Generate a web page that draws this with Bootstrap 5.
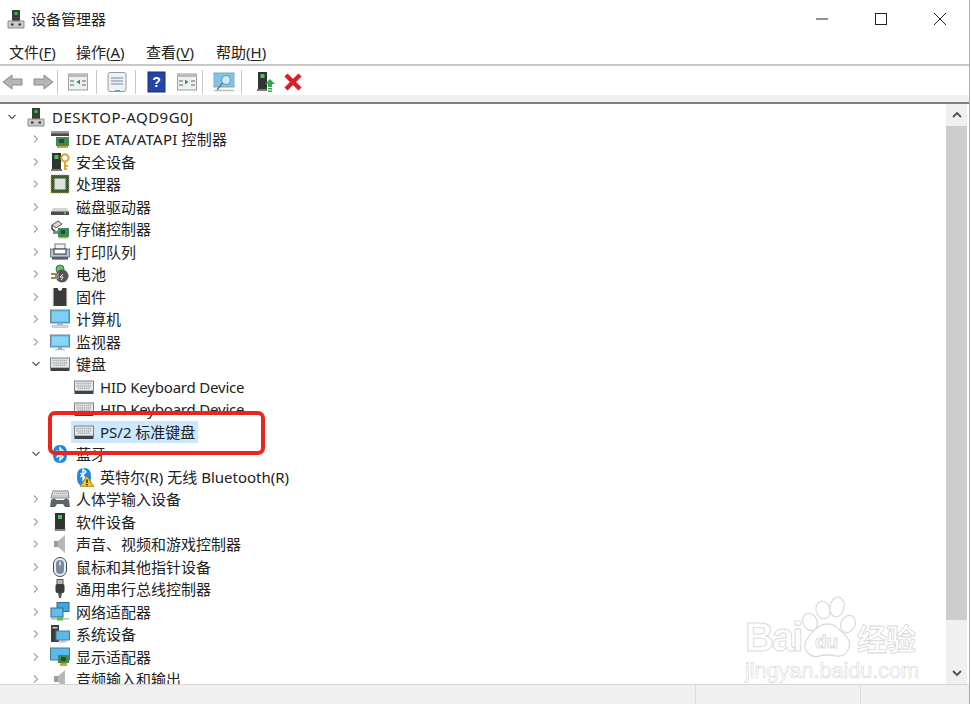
<!DOCTYPE html>
<html lang="zh-CN">
<head>
<meta charset="utf-8">
<title>设备管理器</title>
<link href="https://cdn.jsdelivr.net/npm/bootstrap@5.3.0/dist/css/bootstrap.min.css" rel="stylesheet">
<style>
html,body{height:704px;overflow:hidden;background:#fff}
body{font-family:"Noto Sans","Noto Sans CJK SC",sans-serif;font-size:15px;color:#222;line-height:1.2}
.win{height:704px;width:970px;border-right:1px solid #8fb8d8;position:relative;overflow:hidden}
.titlebar{height:38px;flex:none;padding-left:6px;font-size:15px}
.titlebar svg.appi{width:20px;height:20px;margin-right:5px}
.capbtns{margin-left:auto}
.capbtn{width:59px;height:38px}
.menubar{height:28px;flex:none;padding-left:9px;padding-top:1px;gap:20px;border-bottom:2px solid #c9c9c9;font-size:15px}
.menubar u{text-underline-offset:2px}
.mi{width:50px;white-space:nowrap}
.mi-first{width:47px;white-space:nowrap}
.toolbar{height:29px;flex:none;padding-left:2px;padding-top:2px}
.tb{width:22px;height:22px;flex:none}
.tsep{width:1px;height:24px;background:#c8c8c8;flex:none}
.tb-fwd{margin-left:8px;margin-right:3px}
.tb-a{margin-left:9px;margin-right:7px}
.tb-d{margin-left:9px}
.tb-b{margin-left:9px;margin-right:4px}
.tb-e{margin-left:10px;margin-right:6px}
.tb-f{margin-left:12px}
.tb-g{margin-left:6px}
.strip{height:9px;flex:none;background:#f0f0f0;border-bottom:2px solid #7f7f7f}
.mainp{flex:1 1 auto;min-height:0;overflow:hidden}
.tree{flex:1 1 auto;overflow:hidden;padding-top:1.500px}
.trow{height:22.5px;flex:none;white-space:nowrap}
.l0{padding-left:6px}.l1{padding-left:30px}.l2{padding-left:54px}
.chev{width:12px;height:12px;flex:none}
.tic{width:20px;height:20px;flex:none;margin-left:8px;margin-right:6px}
.sel{background:#cce8ff;height:22px;display:inline-flex;align-items:center;margin-left:5px;padding-left:3px;padding-right:3px}
.sel .tic{margin-left:0}
.wide-caps{letter-spacing:.47px}
.narrow-txt{letter-spacing:-.2px}
.ide-txt{letter-spacing:.2px}
.sbar{width:21px;flex:none;background:#f0f0f0;margin-right:2px}
.sarrow{height:22px;flex:none}
.thumb{height:494px;flex:none;background:#cdcdcd}
.sfill{flex:1 1 auto}
.statusb{height:20px;flex:none;background:#f0f0f0;border-top:1px solid #d7d7d7}
.stcell{border-left:1px solid #dcdcdc;height:100%}
.stcell-a{width:165px}
.stcell-b{width:109px}
.redbox{position:absolute;left:48px;top:411px;width:217px;height:44px;border:4px solid #e8261f;border-radius:7px;pointer-events:none}
.wm{position:absolute;left:740px;top:595px;width:205px;height:90px;pointer-events:none}
.wmt{position:absolute;color:#fff;-webkit-text-stroke:1px #dcdcdc;font-family:"Liberation Sans",sans-serif;line-height:1;white-space:nowrap}
.wm1{left:5px;top:22px;font-size:40px;font-weight:700;letter-spacing:-2px}
.wm2{left:75px;top:37px;font-size:19px;font-weight:700}
.wm3{left:117px;top:27px;font-size:30px;font-family:"Noto Sans CJK SC",sans-serif;font-weight:700;-webkit-text-stroke:.8px #d8d8d8;letter-spacing:-1px}
.wm4{left:5px;top:65px;font-size:21.6px;-webkit-text-stroke:.6px #d8d8d8}
</style>
</head>
<body>
<svg width="0" height="0" class="d-none">
<defs>
<symbol id="chr" viewBox="0 0 12 12"><path d="M4 2.500 7.500 6 4 9.500" fill="none" stroke="#a6a6a6" stroke-width="1.200"/></symbol>
<symbol id="chd" viewBox="0 0 12 12"><path d="M2.500 4 6 7.500 9.500 4" fill="none" stroke="#595959" stroke-width="1.200"/></symbol>
<symbol id="comp" viewBox="0 0 20 20"><rect x="6" y="1" width="8" height="11" fill="#3a3f3a"/><rect x="8.500" y="3" width="3" height="3" fill="#39b54a"/><path d="M2 12h16v7H2z" fill="#c9c9c9" stroke="#8e8e8e"/><rect x="5" y="14.500" width="2.500" height="2" fill="#333"/><rect x="12.500" y="14.500" width="2.500" height="2" fill="#333"/></symbol>
<symbol id="ide" viewBox="0 0 20 20"><rect x="1" y="2" width="18" height="5" rx="1" fill="#9a9a9a"/><rect x="1" y="4.500" width="18" height="2.500" fill="#4a4a4a"/><rect x="6" y="8" width="13" height="9" fill="#3e8a5b"/><rect x="9" y="10" width="5" height="4" fill="#1f4f34"/><rect x="7" y="17" width="11" height="2" fill="#d9a21b"/></symbol>
<symbol id="sec" viewBox="0 0 20 20"><rect x="2" y="1" width="9" height="17" fill="#2f3531"/><rect x="4.500" y="3" width="4" height="4" fill="#4fbf5a"/><rect x="1" y="17" width="11" height="2" fill="#777"/><circle cx="15" cy="6" r="3.600" fill="none" stroke="#d9a93a" stroke-width="2.200"/><path d="M15 9v9M15 14h3M15 17h2" stroke="#d9a93a" stroke-width="2"/></symbol>
<symbol id="cpu" viewBox="0 0 20 20"><rect x="1" y="1" width="18" height="18" fill="#3f5d35"/><rect x="1" y="1" width="18" height="18" fill="none" stroke="#b9a24a" stroke-dasharray="1 1"/><rect x="4.500" y="4.500" width="11" height="11" fill="#dfe2dd"/></symbol>
<symbol id="disk" viewBox="0 0 20 20"><path d="M3 11h14l2 4v3H1v-3z" fill="#d4d4d4"/><rect x="1" y="14.500" width="18" height="3.500" fill="#4c4c4c"/><rect x="14" y="15.500" width="2" height="1.400" fill="#6ee26e"/></symbol>
<symbol id="stor" viewBox="0 0 20 20"><path d="M2 6l6-4 4 3-6 4z" fill="#d8d8d8" stroke="#555"/><path d="M2 6v4l4 3 2-1" fill="none" stroke="#555" stroke-width="1.600"/><rect x="3" y="12" width="11" height="3" fill="#888"/><rect x="8" y="9" width="11" height="9" fill="#3e8a5b"/><rect x="11" y="11" width="4" height="4" fill="#1f4f34"/><rect x="9" y="18" width="9" height="1.400" fill="#d9a21b"/></symbol>
<symbol id="prn" viewBox="0 0 20 20"><rect x="5" y="2" width="10" height="6" fill="#f5f5f5" stroke="#777"/><rect x="0.500" y="7" width="19" height="8" fill="#a9c4d9" stroke="#6b7f8e"/><rect x="4" y="7" width="12" height="5" fill="#fff" stroke="#333"/><rect x="2" y="15" width="16" height="2.600" fill="#5d5d5d"/></symbol>
<symbol id="bat" viewBox="0 0 20 20"><circle cx="10" cy="5" r="4" fill="#6bc06a" stroke="#2f7d32"/><circle cx="12" cy="12" r="6.500" fill="#555"/><path d="M1 10h6M1 14h6" stroke="#a88a2a" stroke-width="1.800"/><path d="M5 9h4v6H5z" fill="#888"/><path d="M13 10l-3 3h3l-2 3" fill="none" stroke="#eee"/></symbol>
<symbol id="fw" viewBox="0 0 20 20"><rect x="3.500" y="1" width="13" height="18" fill="#3a3a3a"/><circle cx="10" cy="1.500" r="2.200" fill="#fff"/><path d="M3.500 3h-1M3.500 6h-1M3.500 9h-1M3.500 12h-1M3.500 15h-1M3.500 18h-1M16.500 3h1M16.500 6h1M16.500 9h1M16.500 12h1M16.500 15h1M16.500 18h1" stroke="#999" stroke-width="1.200"/></symbol>
<symbol id="pc" viewBox="0 0 20 20"><rect x="0.500" y="1" width="19" height="13" fill="#4fb5e8" stroke="#6e8796"/><rect x="2" y="2.500" width="16" height="10" fill="#7fd0f7"/><rect x="7" y="14" width="6" height="2" fill="#aab4ba"/><rect x="2" y="16.500" width="16" height="2" fill="#d5d9dc" stroke="#a4a9ad" stroke-width=".5"/></symbol>
<symbol id="mon" viewBox="0 0 20 20"><rect x="0.500" y="3" width="19" height="12" fill="#59b9ea" stroke="#6e8796"/><rect x="2" y="4.500" width="16" height="9" fill="#8bd3f7"/><rect x="8" y="15" width="4" height="2" fill="#9aa4aa"/><rect x="5" y="17" width="10" height="1.200" fill="#b8bdc0"/></symbol>
<symbol id="kb" viewBox="0 0 20 20"><rect x="0.500" y="4" width="19" height="10" fill="#e4e6e8" stroke="#7f8387"/><path d="M2.500 6.500h15M2.500 9h15M4 11.300h12" stroke="#a6aaae" stroke-width="1.500" stroke-dasharray="1.200 .7"/><rect x="0.500" y="14" width="19" height="3" fill="#3f4245"/></symbol>
<symbol id="bt" viewBox="0 0 20 20"><path d="M10 1c5 0 7 3 7 9s-2 9-7 9-7-3-7-9 2-9 7-9z" fill="#1e88e5"/><path d="M6.500 6.500 13 13l-3 3V4l3 3-6.500 6.500" fill="none" stroke="#fff" stroke-width="1.400"/></symbol>
<symbol id="btw" viewBox="0 0 20 20"><path d="M10 1c5 0 7 3 7 9s-2 9-7 9-7-3-7-9 2-9 7-9z" fill="#1e88e5"/><path d="M6.500 6 11 10.500 9 13V2l3 3-5.500 5" fill="none" stroke="#fff" stroke-width="1.300"/><path d="M13 9 20 19.500H6z" fill="#f5c11d" stroke="#8a6d00" stroke-width=".6"/><path d="M13 12.500v3.500M13 17v1.500" stroke="#222" stroke-width="1.400"/></symbol>
<symbol id="hid" viewBox="0 0 20 20"><path d="M3 2h15l1 7H1z" fill="#e4e6e8" stroke="#7f8387"/><path d="M4 4.500h13M3 7h15" stroke="#a6aaae" stroke-width="1.300" stroke-dasharray="1.200 .7"/><path d="M1 11c2-2 4-2 5 0h8c1-2 3-2 5 0l1 7h-5l-2-3H7l-2 3H0z" fill="#5f6468"/></symbol>
<symbol id="sw" viewBox="0 0 20 20"><rect x="5" y="1" width="10" height="17" fill="#2f3531"/><rect x="8" y="3" width="4" height="4" fill="#4fbf5a"/><rect x="4.500" y="17" width="11" height="2" fill="#8a8a8a"/></symbol>
<symbol id="spk" viewBox="0 0 20 20"><rect x="4" y="7" width="4" height="6" fill="#9a9c9e"/><path d="M8 7l7-6v18l-7-6z" fill="#b5b7b9"/></symbol>
<symbol id="mou" viewBox="0 0 20 20"><rect x="3.500" y="0.500" width="13" height="19" rx="6.500" fill="#e9eef3" stroke="#3d4954"/><rect x="6" y="3" width="8" height="14" rx="4" fill="#7b8a9a"/><rect x="9.200" y="4.500" width="1.600" height="4" fill="#dfe4e9"/></symbol>
<symbol id="usb" viewBox="0 0 20 20"><rect x="7" y="0.500" width="6" height="5" fill="#b8b8b8" stroke="#555"/><rect x="5.500" y="5" width="9" height="9" rx="2" fill="#3a3a3a"/><path d="M8 14h4l-1 5H9z" fill="#555"/></symbol>
<symbol id="net" viewBox="0 0 20 20"><rect x="7" y="0.500" width="12" height="9" fill="#3fa5de" stroke="#2f6e92"/><rect x="1" y="6" width="12" height="9" fill="#62bdee" stroke="#2f6e92"/><rect x="1" y="16" width="18" height="1.600" fill="#bcbcbc"/><rect x="7" y="15" width="6" height="3.500" fill="#58c04e"/></symbol>
<symbol id="sys" viewBox="0 0 20 20"><rect x="1" y="1" width="8" height="17" fill="#3b3f3c"/><rect x="2.500" y="3" width="5" height="1.500" fill="#ccc"/><rect x="6" y="7" width="13.500" height="9" fill="#59b9ea" stroke="#4d7a92"/><rect x="10" y="16" width="5" height="1.500" fill="#9aa4aa"/><rect x="8" y="17.500" width="9" height="1" fill="#b8bdc0"/></symbol>
<symbol id="dsp" viewBox="0 0 20 20"><rect x="0.500" y="1" width="19" height="12" fill="#59b9ea" stroke="#4d7a92"/><rect x="8" y="8" width="11" height="8" fill="#3e8a5b"/><rect x="11" y="10" width="5" height="4" fill="#1f4f34"/><rect x="10" y="16" width="7" height="3" fill="#d9a21b"/></symbol>
<symbol id="win" viewBox="0 0 22 22"><rect x="1.500" y="3" width="19" height="16" fill="#eef1f3" stroke="#9aa0a4"/><rect x="1.500" y="3" width="19" height="3" fill="#b7bcc0"/><path d="M3 9h4v2H3zM3 13h4v2H3zM15 9h4v2h-4zM15 13h4v2h-4z" fill="#a5aaae"/></symbol>
</defs>
</svg>

<div class="win d-flex flex-column">
  <div class="titlebar d-flex align-items-center">
    <svg class="appi" viewBox="0 0 20 20"><use href="#comp"/></svg>
    <span>设备管理器</span>
    <div class="capbtns d-flex">
      <div class="capbtn d-flex align-items-center justify-content-center"><svg width="14" height="14"><path d="M1 7h12" stroke="#222"/></svg></div>
      <div class="capbtn d-flex align-items-center justify-content-center"><svg width="14" height="14"><rect x="1.500" y="1.500" width="11" height="11" fill="none" stroke="#222"/></svg></div>
      <div class="capbtn d-flex align-items-center justify-content-center"><svg width="14" height="14"><path d="M1 1l12 12M13 1 1 13" stroke="#222"/></svg></div>
    </div>
  </div>
  <div class="menubar d-flex align-items-center">
    <span class="mi-first">文件(<u>F</u>)</span><span class="mi">操作(<u>A</u>)</span><span class="mi">查看(<u>V</u>)</span><span class="mi">帮助(<u>H</u>)</span>
  </div>
  <div class="toolbar d-flex align-items-center">
    <svg class="tb" viewBox="0 0 22 22"><path d="M1 11 10 4v4h10v6H10v4z" fill="#b5b5b5" stroke="#8a8a8a"/></svg>
    <svg class="tb tb-fwd" viewBox="0 0 22 22"><path d="M21 11 12 4v4H2v6h10v4z" fill="#b5b5b5" stroke="#8a8a8a"/></svg>
    <div class="tsep"></div>
    <svg class="tb tb-a" viewBox="0 0 22 22"><use href="#win"/><path d="M13 8.500v5l-3.500-2.500z" fill="#2f9e44"/></svg>
    <div class="tsep"></div>
    <svg class="tb tb-a" viewBox="0 0 22 22"><rect x="2" y="1.500" width="18" height="19" rx="2" fill="#eef0f2" stroke="#999"/><path d="M5 7h12M5 10h12M5 13h12" stroke="#6f8aa0"/><rect x="9" y="19" width="5" height="2" fill="#3fb2d8"/></svg>
    <div class="tsep"></div>
    <svg class="tb tb-d" viewBox="0 0 22 22"><rect x="3" y="1" width="17" height="20" fill="#2345a8" stroke="#1b2f7a"/><text x="11.500" y="16" font-size="14" font-weight="700" fill="#fff" text-anchor="middle" font-family="Liberation Sans,sans-serif">?</text></svg>
    <svg class="tb tb-b" viewBox="0 0 22 22"><use href="#win"/><path d="M9 8.500v5l3.500-2.500z" fill="#2f9e44"/></svg>
    <div class="tsep"></div>
    <svg class="tb tb-e" viewBox="0 0 22 22"><rect x="1" y="2" width="20" height="14" fill="#7cc6ee" stroke="#8aa"/><circle cx="13" cy="9" r="4.500" fill="#cfe8f5" stroke="#6d8ea0"/><path d="M9.500 12 4 19" stroke="#777" stroke-width="1.500"/><path d="M1 19.500h20" stroke="#bbb" stroke-width="1.500"/></svg>
    <div class="tsep"></div>
    <svg class="tb tb-f" viewBox="0 0 22 22"><rect x="4" y="1" width="9" height="17" fill="#2f3531"/><rect x="6.500" y="3" width="4" height="4" fill="#4fbf5a"/><rect x="3" y="18" width="10" height="2" fill="#777"/><path d="M16 8l5 5h-3v3h-4v-3h-3z" fill="#2fa84f"/><path d="M14 17h4v1.500h-4zM14 19.500h4V21h-4z" fill="#2fa84f"/></svg>
    <svg class="tb tb-g" viewBox="0 0 22 22"><path d="M4 4 18 18M18 4 4 18" stroke="#d9202a" stroke-width="4.500"/></svg>
  </div>
  <div class="strip"></div>
  <div class="mainp d-flex">
    <div class="tree d-flex flex-column">
      <div class="trow l0 d-flex align-items-center"><svg class="chev"><use href="#chd"/></svg><svg class="tic"><use href="#comp"/></svg><span class="wide-caps">DESKTOP-AQD9G0J</span></div>
      <div class="trow l1 d-flex align-items-center"><svg class="chev"><use href="#chr"/></svg><svg class="tic"><use href="#ide"/></svg><span class="ide-txt">IDE ATA/ATAPI 控制器</span></div>
      <div class="trow l1 d-flex align-items-center"><svg class="chev"><use href="#chr"/></svg><svg class="tic"><use href="#sec"/></svg><span>安全设备</span></div>
      <div class="trow l1 d-flex align-items-center"><svg class="chev"><use href="#chr"/></svg><svg class="tic"><use href="#cpu"/></svg><span>处理器</span></div>
      <div class="trow l1 d-flex align-items-center"><svg class="chev"><use href="#chr"/></svg><svg class="tic"><use href="#disk"/></svg><span>磁盘驱动器</span></div>
      <div class="trow l1 d-flex align-items-center"><svg class="chev"><use href="#chr"/></svg><svg class="tic"><use href="#stor"/></svg><span>存储控制器</span></div>
      <div class="trow l1 d-flex align-items-center"><svg class="chev"><use href="#chr"/></svg><svg class="tic"><use href="#prn"/></svg><span>打印队列</span></div>
      <div class="trow l1 d-flex align-items-center"><svg class="chev"><use href="#chr"/></svg><svg class="tic"><use href="#bat"/></svg><span>电池</span></div>
      <div class="trow l1 d-flex align-items-center"><svg class="chev"><use href="#chr"/></svg><svg class="tic"><use href="#fw"/></svg><span>固件</span></div>
      <div class="trow l1 d-flex align-items-center"><svg class="chev"><use href="#chr"/></svg><svg class="tic"><use href="#pc"/></svg><span>计算机</span></div>
      <div class="trow l1 d-flex align-items-center"><svg class="chev"><use href="#chr"/></svg><svg class="tic"><use href="#mon"/></svg><span>监视器</span></div>
      <div class="trow l1 d-flex align-items-center"><svg class="chev"><use href="#chd"/></svg><svg class="tic"><use href="#kb"/></svg><span>键盘</span></div>
      <div class="trow l2 d-flex align-items-center"><span class="chev"></span><svg class="tic"><use href="#kb"/></svg><span class="narrow-txt">HID Keyboard Device</span></div>
      <div class="trow l2 d-flex align-items-center"><span class="chev"></span><svg class="tic"><use href="#kb"/></svg><span class="narrow-txt">HID Keyboard Device</span></div>
      <div class="trow l2 d-flex align-items-center"><span class="chev"></span><span class="sel"><svg class="tic"><use href="#kb"/></svg><span>PS/2 标准键盘</span></span></div>
      <div class="trow l1 d-flex align-items-center"><svg class="chev"><use href="#chd"/></svg><svg class="tic"><use href="#bt"/></svg><span>蓝牙</span></div>
      <div class="trow l2 d-flex align-items-center"><span class="chev"></span><svg class="tic"><use href="#btw"/></svg><span>英特尔(R) 无线 Bluetooth(R)</span></div>
      <div class="trow l1 d-flex align-items-center"><svg class="chev"><use href="#chr"/></svg><svg class="tic"><use href="#hid"/></svg><span>人体学输入设备</span></div>
      <div class="trow l1 d-flex align-items-center"><svg class="chev"><use href="#chr"/></svg><svg class="tic"><use href="#sw"/></svg><span>软件设备</span></div>
      <div class="trow l1 d-flex align-items-center"><svg class="chev"><use href="#chr"/></svg><svg class="tic"><use href="#spk"/></svg><span>声音、视频和游戏控制器</span></div>
      <div class="trow l1 d-flex align-items-center"><svg class="chev"><use href="#chr"/></svg><svg class="tic"><use href="#mou"/></svg><span>鼠标和其他指针设备</span></div>
      <div class="trow l1 d-flex align-items-center"><svg class="chev"><use href="#chr"/></svg><svg class="tic"><use href="#usb"/></svg><span>通用串行总线控制器</span></div>
      <div class="trow l1 d-flex align-items-center"><svg class="chev"><use href="#chr"/></svg><svg class="tic"><use href="#net"/></svg><span>网络适配器</span></div>
      <div class="trow l1 d-flex align-items-center"><svg class="chev"><use href="#chr"/></svg><svg class="tic"><use href="#sys"/></svg><span>系统设备</span></div>
      <div class="trow l1 d-flex align-items-center"><svg class="chev"><use href="#chr"/></svg><svg class="tic"><use href="#dsp"/></svg><span>显示适配器</span></div>
      <div class="trow l1 d-flex align-items-center"><svg class="chev"><use href="#chr"/></svg><svg class="tic"><use href="#spk"/></svg><span>音频输入和输出</span></div>
    </div>
    <div class="sbar d-flex flex-column">
      <div class="sarrow d-flex align-items-center justify-content-center"><svg width="10" height="8"><path d="M1 6l4-4 4 4" fill="none" stroke="#505050" stroke-width="1.800"/></svg></div>
      <div class="thumb"></div>
      <div class="sfill"></div>
      <div class="sarrow d-flex align-items-center justify-content-center"><svg width="10" height="8"><path d="M1 2l4 4 4-4" fill="none" stroke="#505050" stroke-width="1.800"/></svg></div>
    </div>
  </div>
  <div class="statusb d-flex justify-content-end">
    <div class="stcell stcell-a"></div>
    <div class="stcell stcell-b"></div>
  </div>
  <div class="redbox"></div>
  <div class="wm">
    <svg class="position-absolute top-0 start-0" width="205" height="70" viewBox="0 0 205 70" fill="none" stroke="#dcdcdc" stroke-width="1.300">
      <ellipse cx="83" cy="15" rx="7" ry="9" transform="rotate(-15 83 15)" fill="#fff"/>
      <ellipse cx="97" cy="12" rx="7" ry="10" transform="rotate(10 97 12)" fill="#fff"/>
      <ellipse cx="70" cy="27" rx="7" ry="9" transform="rotate(-25 70 27)" fill="#fff"/>
      <ellipse cx="108" cy="29" rx="7" ry="9" transform="rotate(25 108 29)" fill="#fff"/>
      <path d="M88 29c8 0 11 6 17 11 9 8 3 22-8 21-6-1-11-2-17 0-11 3-19-8-13-17 5-7 11-15 21-15z" fill="#fff"/>
    </svg>
    <span class="wmt wm1">Bai</span>
    <span class="wmt wm2">du</span>
    <span class="wmt wm3">经验</span>
    <span class="wmt wm4">jingyan.baidu.com</span>
  </div>
</div>
<script src="https://cdn.jsdelivr.net/npm/bootstrap@5.3.0/dist/js/bootstrap.bundle.min.js"></script>
</body>
</html>
